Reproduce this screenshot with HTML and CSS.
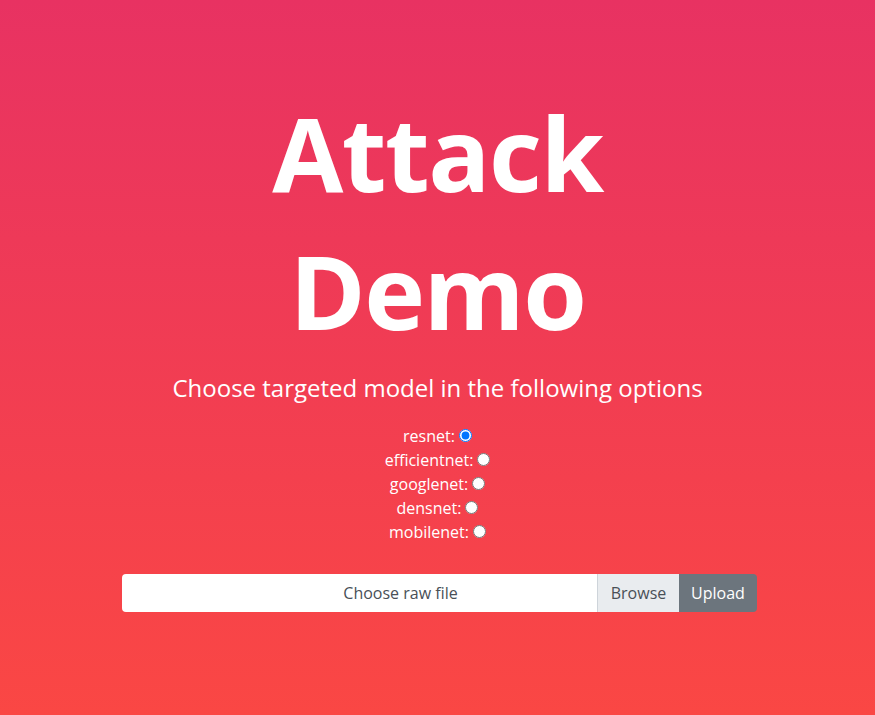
FILE: index.html
```html
<!DOCTYPE html>
<html>
<head>
<meta charset="utf-8">
<link rel="stylesheet" href="styles.css">
</head>
<body>
<main class="page">
  <h1 class="title">Attack<br>Demo</h1>
  <h4 class="subtitle">Choose targeted model in the following options</h4>
  <form class="models">
    <label class="opt">resnet: <input type="radio" name="model" checked></label>
    <label class="opt">efficientnet: <input type="radio" name="model"></label>
    <label class="opt">googlenet: <input type="radio" name="model"></label>
    <label class="opt">densnet: <input type="radio" name="model"></label>
    <label class="opt">mobilenet: <input type="radio" name="model"></label>
  </form>
  <div class="upload-group">
    <label class="file-field">
      <span class="file-text">Choose raw file</span>
      <span class="browse">Browse</span>
    </label>
    <button class="upload" type="button">Upload</button>
  </div>
</main>
</body>
</html>
```
FILE: styles.css
```css
html, body {
  margin: 0;
  height: 100%;
}
body {
  background: linear-gradient(to bottom, #e83262 0%, #fa4744 100%);
  font-family: "Open Sans", "Liberation Sans", sans-serif;
  color: #fff;
}
.page {
  display: flex;
  flex-direction: column;
  align-items: center;
  padding-top: 83px;
}
.title {
  margin: 0;
  font-size: 103px;
  font-weight: 700;
  line-height: 138px;
  text-align: center;
  letter-spacing: -1.5px;
}
.subtitle {
  margin: 15px 0 0;
  font-size: 24px;
  font-weight: 400;
  line-height: 28.8px;
}
.models {
  display: flex;
  flex-direction: column;
  align-items: center;
  margin-top: 21px;
}
.opt {
  font-size: 16px;
  line-height: 24px;
  display: flex;
  align-items: center;
  gap: 4px;
}
.opt input {
  margin: 0;
  width: 13px;
  height: 13px;
}
.upload-group {
  display: flex;
  width: 635px;
  height: 38px;
  margin: 30px 0 0 4px;
  border-radius: 4px;
  overflow: hidden;
  font-size: 16px;
}
.file-field {
  flex: 1;
  position: relative;
  background: #fff;
  color: #495057;
  display: flex;
  align-items: center;
  justify-content: center;
}
.file-text {
  position: relative;
  left: 0;
}
.browse {
  position: absolute;
  top: 0;
  right: 0;
  bottom: 0;
  width: 81px;
  background: #e9ecef;
  color: #495057;
  border-left: 1px solid #ced4da;
  display: flex;
  align-items: center;
  justify-content: center;
}
.upload {
  width: 78px;
  border: 0;
  background: #6c757d;
  color: #fff;
  font: inherit;
  padding: 0;
}
```
